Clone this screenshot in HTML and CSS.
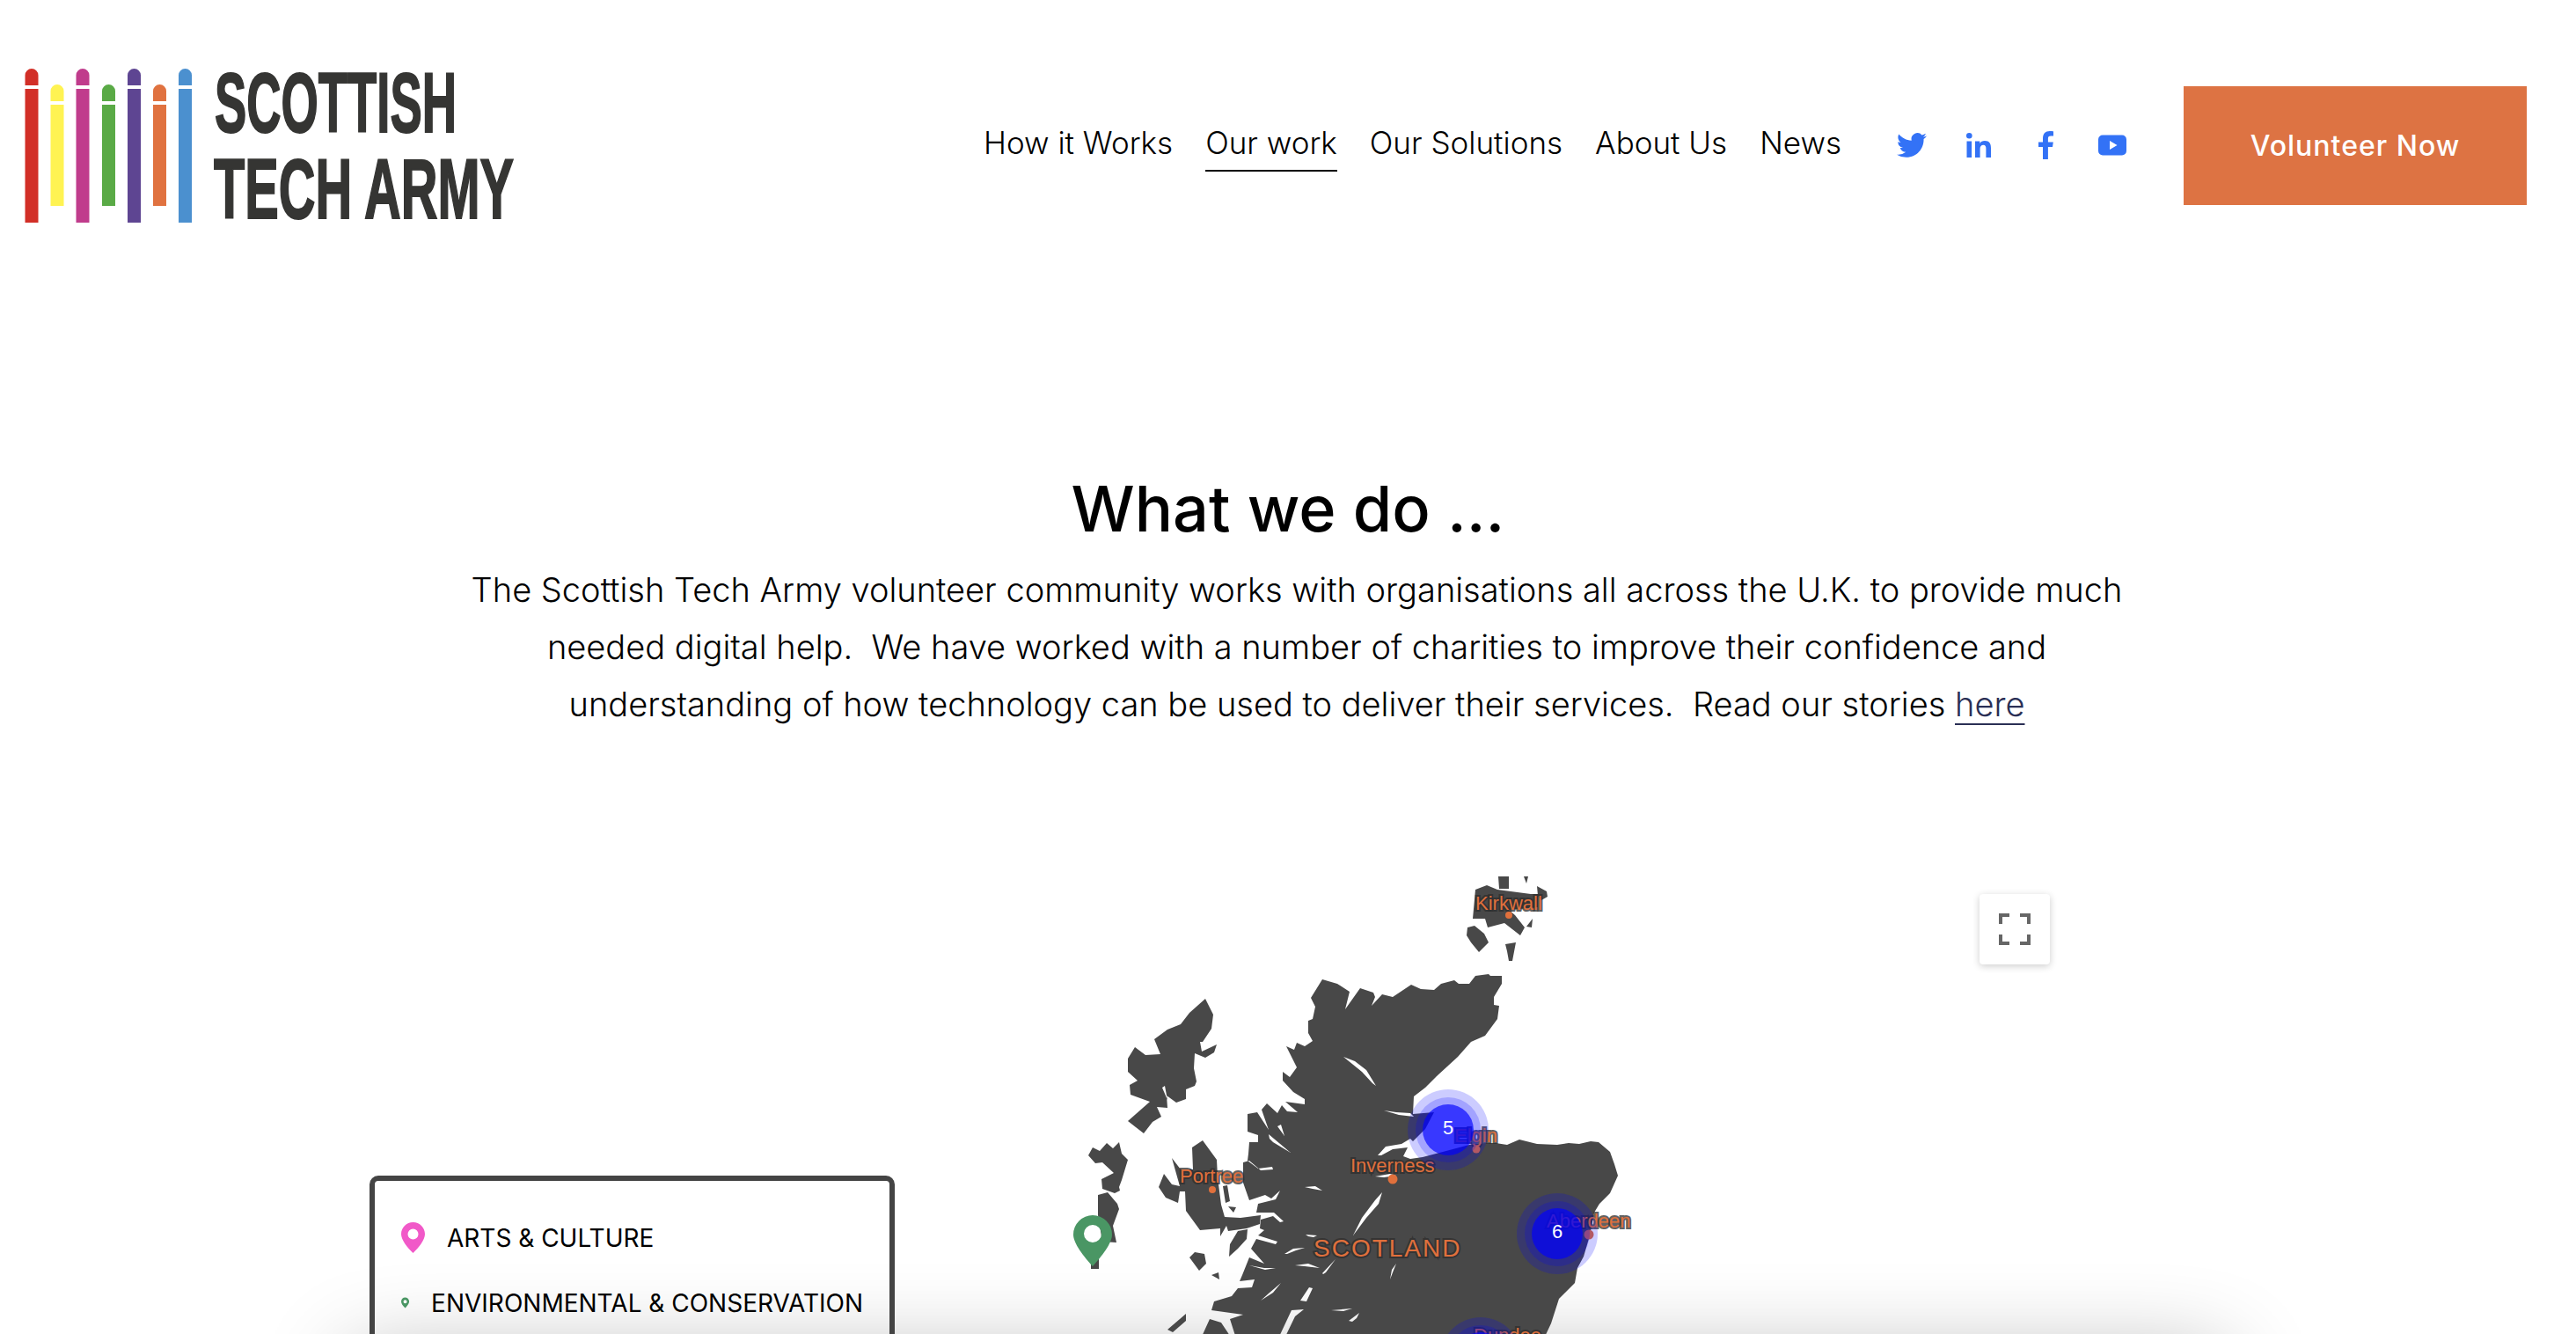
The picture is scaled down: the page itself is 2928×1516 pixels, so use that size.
FILE: index.html
```html
<!DOCTYPE html>
<html lang="en">
	<head>
		<meta charset="UTF-8" />
		<meta name="viewport" content="width=device-width, initial-scale=1.0" />
		<title>Our work - Scottish Tech Army</title>
		<link rel="stylesheet" href="styles.css">
	</head>
	<body>
		<div class="page">
			<header class="site-header">
				<a href="#" class="logo">
					<svg width="600" height="190" viewBox="0 70 600 190">
						<path class="bar-red" d="M28.500 96V84.500a7.500 7.500 0 0 1 15 0V96zM28.500 100h15v152h-15z" />
						<path class="bar-yellow" d="M57.500 114V102.500a7.500 7.500 0 0 1 15 0V114zM57.500 118h15v115h-15z" />
						<path class="bar-magenta" d="M86.500 96V84.500a7.500 7.500 0 0 1 15 0V96zM86.500 100h15v152h-15z" />
						<path class="bar-green" d="M116 114V102.500a7.500 7.500 0 0 1 15 0V114zM116 118h15v115h-15z" />
						<path class="bar-purple" d="M145 96V84.500a7.500 7.500 0 0 1 15 0V96zM145 100h15v152h-15z" />
						<path class="bar-orange" d="M174 114V102.500a7.500 7.500 0 0 1 15 0V114zM174 118h15v115h-15z" />
						<path class="bar-blue" d="M203 96V84.500a7.500 7.500 0 0 1 15 0V96zM203 100h15v152h-15z" />
						<text class="logo-text" x="244" y="149" textLength="275" lengthAdjust="spacingAndGlyphs">SCOTTISH</text>
						<text class="logo-text" x="243" y="247" textLength="341" lengthAdjust="spacingAndGlyphs">TECH ARMY</text>
					</svg>
				</a>
				<nav class="main-nav">
					<a href="#">How it Works</a>
					<a href="#" class="active">Our work</a>
					<a href="#">Our Solutions</a>
					<a href="#">About Us</a>
					<a href="#">News</a>
				</nav>
				<div class="social">
					<a href="#"><svg viewBox="0 0 24 24" width="34" height="34"><path d="M23.953 4.570a10 10 0 0 1-2.825.775 4.958 4.958 0 0 0 2.163-2.723c-.951.555-2.005.959-3.127 1.184a4.920 4.920 0 0 0-8.384 4.482C7.690 8.095 4.067 6.130 1.640 3.162a4.822 4.822 0 0 0-.666 2.475c0 1.710.870 3.213 2.188 4.096a4.904 4.904 0 0 1-2.228-.616v.060a4.923 4.923 0 0 0 3.946 4.827 4.996 4.996 0 0 1-2.212.085 4.936 4.936 0 0 0 4.604 3.417 9.867 9.867 0 0 1-6.102 2.105c-.390 0-.779-.023-1.170-.067a13.995 13.995 0 0 0 7.557 2.209c9.053 0 13.998-7.496 13.998-13.985 0-.210 0-.420-.015-.630A9.935 9.935 0 0 0 24 4.590z" /></svg></a>
					<a href="#"><svg viewBox="0 0 28 28" width="28" height="28"><circle cx="3.300" cy="3.300" r="3.300" /><path d="M.500 9.500h5.600V28H.500zM10 9.500h5.300v2.600c1-1.800 3-3.100 5.700-3.100 5.300 0 7 3.300 7 8.200V28h-5.600V18c0-2.500-.7-4.300-3-4.300-2.400 0-3.800 1.700-3.800 4.300v10H10z" /></svg></a>
					<a href="#"><svg viewBox="0 0 17 32" width="17" height="32"><path d="M5 32V18H0v-5.500h5V8.300C5 2.900 8 0 12.700 0c1.800 0 3.400.1 4.300.3v5.200h-2.900c-2.500 0-3.200 1.200-3.200 3v4h5.900l-.8 5.500h-5.100v14z" /></svg></a>
					<a href="#"><svg viewBox="0 0 32 24" width="32" height="24"><path fill-rule="evenodd" d="M5 .500h22a5 5 0 0 1 5 5v13a5 5 0 0 1-5 5H5a5 5 0 0 1-5-5v-13a5 5 0 0 1 5-5zM13 7v10l8.500-5z" /></svg></a>
				</div>
				<a href="#" class="volunteer-btn">Volunteer Now</a>
			</header>

			<section class="hero">
				<h1>What we do ...</h1>
				<p>
					The Scottish Tech Army volunteer community works with organisations all across the U.K. to provide much<br />
					needed digital help.&nbsp; We have worked with a number of charities to improve their confidence and<br />
					understanding of how technology can be used to deliver their services.&nbsp; Read our stories <a href="#">here</a>
				</p>
			</section>

			<section class="map">
				<svg class="map-canvas" width="700" height="560" viewBox="1220 980 700 560">
					<!-- mainland -->
					<path class="land" fill-rule="evenodd" d="M1503 1112L1520 1117 1534 1126 1529 1146 1546 1122 1561 1127 1563 1132 1559 1142 1571 1129 1583 1132 1604 1118 1615 1123 1630 1124 1638 1117 1653 1113 1658 1117 1670 1117 1677 1108 1692 1106 1694 1108 1707 1108 1707 1117 1698 1132 1698 1141 1704 1142 1702 1157 1688 1176 1672 1183 1657 1200 1633 1222 1620 1235 1607 1245 1606 1265 1630 1263 1620 1282 1606 1296 1603 1293 1593 1299 1575 1302 1566 1312 1570 1312 1583 1305 1600 1303 1595 1313 1603 1316 1617 1314 1640 1308 1670 1300 1693 1298 1700 1298 1713 1300 1727 1294 1747 1299 1770 1300 1783 1298 1795 1299 1808 1296 1817 1297 1830 1308 1835 1322 1839 1335 1830 1355 1818 1367 1812 1377 1807 1403 1800 1427 1793 1440 1790 1457 1772 1475 1763 1503 1755 1520 1405 1520 1398 1498 1413 1493 1377 1488 1380 1478 1400 1472 1407 1463 1423 1462 1426 1453 1409 1455 1412 1448 1420 1428 1437 1435 1422 1418 1428 1407 1450 1413 1452 1410 1430 1403 1437 1397 1432 1395 1433 1385 1447 1381 1455 1388 1459 1387 1448 1377 1428 1377 1430 1367 1450 1362 1455 1352 1445 1361 1438 1357 1420 1363 1413 1343 1413 1320 1420 1318 1433 1329 1447 1328 1446 1325 1430 1327 1418 1318 1419 1310 1420 1297 1430 1297 1430 1289 1418 1285 1418 1265 1429 1263 1442 1283 1434 1260 1440 1253 1452 1264 1457 1255 1463 1262 1475 1263 1461 1251 1483 1254 1483 1248 1470 1240 1458 1227 1458 1217 1466 1223 1474 1212 1462 1188 1471 1192 1474 1184 1483 1188 1492 1182 1487 1173 1487 1159 1492 1157 1495 1143 1490 1133z
						M1527 1200L1540 1205 1553 1215 1564 1233 1560 1230 1548 1217z
						M1483 1348L1495 1347 1503 1352 1492 1350z
						M1571 1354L1567 1367 1553 1383 1538 1403 1548 1383 1563 1363z
						M1484 1402L1497 1403 1493 1405 1487 1404z
						M1460 1424L1470 1418 1483 1417 1473 1420 1463 1424z
						M1472 1437L1487 1435 1500 1440 1483 1438z
						M1420 1437L1437 1440 1450 1440 1438 1442z
						M1503 1446L1518 1430 1507 1445 1504 1447z
						M1587 1435L1582 1442 1580 1453 1583 1445z
						M1433 1477L1443 1468 1456 1457 1447 1468z
						M1478 1477L1488 1462 1492 1463 1485 1478z
						M1513 1488L1537 1486 1527 1489z
						M1533 1500L1545 1491 1542 1497 1537 1501z
						M1573 1261L1587 1263 1603 1264 1607 1268 1590 1266z
						M1452 1279L1456 1277 1460 1290z
						M1442 1288L1467 1309 1447 1297 1443 1293z
						M1563 1336L1580 1333 1587 1335 1573 1337z
						M1453 1520L1468 1488 1482 1487 1472 1495 1460 1520z" />
					<!-- hebrides -->
					<path class="land" fill-rule="evenodd" d="M1370 1134L1379 1152 1377 1168 1367 1183 1364 1183 1366 1194 1383 1186 1380 1195 1370 1201 1358 1196 1357 1213 1360 1228 1358 1233 1348 1237 1348 1248 1337 1252 1326 1244 1327 1258 1315 1257 1320 1268 1310 1274 1300 1287 1282 1273 1307 1251 1285 1243 1284 1232 1293 1227 1282 1217 1282 1202 1290 1189 1302 1198 1319 1197 1312 1180 1327 1169 1342 1163 1352 1150z
						M1321 1235L1324 1233 1327 1249z" />
					<path class="land" d="M1272 1297L1275 1310 1282 1317 1275 1340 1272 1348 1273 1352 1267 1355 1253 1350 1252 1339 1266 1332 1253 1320 1245 1321 1237 1312 1242 1303 1250 1307 1258 1298 1265 1304z" />
					<path class="land" d="M1248 1357L1259 1354 1270 1367 1272 1373 1265 1392 1269 1411 1253 1410 1248 1380zM1240 1425H1249V1441H1240z" />
					<!-- skye -->
					<path class="land" d="M1355 1303L1367 1295 1383 1317 1384 1337 1385 1345 1388 1368 1392 1382 1410 1383 1433 1380 1432 1390 1417 1395 1396 1398 1394 1392 1387 1404 1387 1395 1364 1397 1348 1375 1347 1353 1341 1353 1339 1366 1325 1360 1317 1348 1323 1333 1332 1345 1341 1347 1332 1315 1342 1328 1356 1328z" />
					<path class="land" d="M1390 1347L1395 1346 1398 1364 1393 1366zM1396 1370L1405 1371 1402 1377zM1397 1427L1398 1413 1407 1398 1418 1396 1417 1407 1407 1418zM1352 1428L1358 1422 1369 1424 1371 1435 1363 1443zM1377 1448L1385 1445 1386 1453zM1327 1510L1348 1492 1348 1500 1333 1513zM1365 1520L1375 1498 1388 1502 1400 1520z" />
					<!-- orkney -->
					<path class="land" d="M1674 1043L1677 1010 1690 1005 1702 1010 1740 1015 1748 1015 1748 1030 1715 1033 1722 1039 1733 1053 1728 1062 1710 1048 1691 1053 1688 1043zM1703 995H1715V1009H1704zM1732 995H1737L1735 1003zM1747 1006L1758 1012 1759 1018 1752 1022 1748 1017zM1735 1052L1742 1043 1741 1053zM1667 1062L1668 1053 1676 1051 1687 1060 1692 1070 1681 1081 1672 1070zM1711 1072L1723 1070 1719 1091 1715 1091 1713 1080z" />
					<!-- labels -->
					<text class="city" x="1677" y="1033">Kirkwall</text>
					<circle class="dot" cx="1715" cy="1039" r="4" />
					<text class="city" x="1341" y="1343">Portree</text>
					<circle class="dot" cx="1378" cy="1351" r="4" />
					<text class="city" x="1535" y="1331">Inverness</text>
					<circle class="dot" cx="1583" cy="1339" r="5.500" />
					<text class="city" x="1653" y="1297">Elgin</text>
					<circle class="dot" cx="1678" cy="1305" r="4.500" />
					<text class="city" x="1758" y="1394">Aberdeen</text>
					<circle class="dot" cx="1806" cy="1402" r="5.500" />
					<text class="city" x="1675" y="1524">Dundee</text>
					<text class="region" x="1493" y="1427">SCOTLAND</text>
					<!-- clusters -->
					<g class="cluster">
						<circle cx="1646" cy="1283" r="46" /><circle cx="1646" cy="1283" r="37" /><circle class="core" cx="1646" cy="1283" r="29" />
						<text x="1646" y="1288">5</text>
					</g>
					<g class="cluster">
						<circle cx="1770" cy="1401" r="46" /><circle cx="1770" cy="1401" r="37" /><circle class="core" cx="1770" cy="1401" r="29" />
						<text x="1770" y="1406">6</text>
					</g>
					<g class="cluster">
						<circle cx="1683" cy="1542" r="46" /><circle cx="1683" cy="1542" r="37" /><circle class="core" cx="1683" cy="1542" r="29" />
					</g>
					<!-- marker -->
					<path class="pin-green" fill-rule="evenodd" d="M1242 1380a22 22 0 0 1 22 22c0 10-12 25-22 36-10-11-22-26-22-36a22 22 0 0 1 22-22zm0 11a10 10 0 1 0 0 20 10 10 0 0 0 0-20z" />
				</svg>

				<button class="fullscreen" type="button" aria-label="Toggle fullscreen view">
					<svg width="36" height="36" viewBox="0 0 36 36"><path d="M0 0h12v4H4v8H0zM24 0h12v12h-4V4h-8zM0 24h4v8h8v4H0zM32 24h4v12H24v-4h8z" /></svg>
				</button>

				<div class="legend">
					<div class="legend-item">
						<svg class="legend-pin pin-pink" viewBox="0 0 27 35" width="27" height="35"><path fill-rule="evenodd" d="M13.500 0C21 0 27 6 27 13.500 27 20 20 29 13.500 35 7 29 0 20 0 13.500 0 6 6 0 13.500 0zm0 7.500a6 6 0 1 0 0 12 6 6 0 0 0 0-12z" /></svg>
						<span>ARTS &amp; CULTURE</span>
					</div>
					<div class="legend-item">
						<svg class="legend-pin pin-green" viewBox="0 0 27 35" width="27" height="35"><path fill-rule="evenodd" d="M13.500 0C21 0 27 6 27 13.500 27 20 20 29 13.500 35 7 29 0 20 0 13.500 0 6 6 0 13.500 0zm0 7.500a6 6 0 1 0 0 12 6 6 0 0 0 0-12z" /></svg>
						<span>ENVIRONMENTAL &amp; CONSERVATION</span>
					</div>
				</div>
			</section>

			<div class="next-section"></div>
		</div>
	</body>
</html>
```

FILE: styles.css
```css
body {
	margin: 0;
	background-color: #fff;
	color: #000;
	font-family: Inter, "Noto Sans", sans-serif;
}
a {
	color: inherit;
	text-decoration: none;
}
.page {
	height: 1516px;
	overflow: hidden;
}

/* header */
.site-header {
	display: flex;
	align-items: center;
	height: 331px;
	padding-right: 56px;
}
.logo {
	display: block;
	height: 190px;
	margin-right: auto;
}
.logo-text {
	font-family: "Liberation Sans", sans-serif;
	font-weight: 700;
	font-size: 96px;
	fill: #353533;
	stroke: #353533;
	stroke-width: 2px;
}
.bar-red { fill: #d22f27; }
.bar-yellow { fill: #fff352; }
.bar-magenta { fill: #c03c8c; }
.bar-green { fill: #5aaa46; }
.bar-purple { fill: #5e4592; }
.bar-orange { fill: #e07240; }
.bar-blue { fill: #4b90cf; }

.main-nav {
	display: flex;
	gap: 37px;
	font-size: 35px;
	font-weight: 300;
	line-height: 50px;
}
.main-nav a {
	padding-bottom: 6px;
	border-bottom: 2px solid transparent;
}
.main-nav .active {
	border-bottom-color: #000;
}
.social {
	display: flex;
	gap: 40px;
	margin-left: 62px;
	margin-top: -2px;
}
.social a {
	display: flex;
	align-items: center;
	justify-content: center;
	width: 36px;
	height: 36px;
}
.social svg {
	fill: #3372f6;
}
.volunteer-btn {
	display: flex;
	align-items: center;
	justify-content: center;
	width: 390px;
	height: 135px;
	margin-left: 63px;
	background-color: #dd7343;
	color: #fff;
	font-size: 32px;
	font-weight: 500;
	letter-spacing: 1px;
}

/* intro */
.hero {
	padding-top: 207px;
	text-align: center;
}
.hero h1 {
	margin: 0;
	font-size: 72px;
	font-weight: 500;
	line-height: 80px;
}
.hero p {
	margin: 20px 0 0;
	padding-left: 20px;
	font-size: 38px;
	font-weight: 300;
	line-height: 65px;
	white-space: nowrap;
}
.hero p a {
	color: #2a2f55;
	text-decoration: underline;
	text-decoration-thickness: 2px;
	text-underline-offset: 8px;
}

/* map */
.map {
	position: relative;
	z-index: 1;
	height: 708px;
}
.map-canvas {
	position: absolute;
	left: 1220px;
	top: 148px;
}
.land {
	fill: #484848;
}
.city,
.region {
	font-family: "Liberation Sans", sans-serif;
	fill: #e0703c;
	stroke: #2e2e2e;
	stroke-width: 4px;
	stroke-opacity: 0.75;
	paint-order: stroke;
}
.city {
	font-size: 22px;
}
.region {
	font-size: 28px;
	letter-spacing: 2px;
}
.dot {
	fill: #e0703c;
}
.cluster circle {
	fill: rgba(0, 0, 255, 0.2);
}
.cluster .core {
	fill: rgba(0, 0, 255, 0.66);
}
.cluster text {
	font-family: "Liberation Sans", sans-serif;
	font-size: 22px;
	fill: #fff;
	text-anchor: middle;
}
.pin-green {
	fill: #4a9664;
}
.pin-pink {
	fill: #f159c8;
}
.fullscreen {
	position: absolute;
	left: 2250px;
	top: 183px;
	display: flex;
	align-items: center;
	justify-content: center;
	width: 80px;
	height: 80px;
	padding: 0;
	border: 0;
	border-radius: 4px;
	background-color: #fff;
	box-shadow: 0 2px 8px rgba(0, 0, 0, 0.2);
}
.fullscreen svg {
	fill: #666;
}
.legend {
	position: absolute;
	left: 420px;
	top: 503px;
	display: flex;
	flex-direction: column;
	gap: 39px;
	box-sizing: border-box;
	width: 597px;
	height: 400px;
	padding: 47px 30px;
	border: 6px solid #444;
	border-radius: 10px;
}
.legend-item {
	display: flex;
	align-items: center;
	gap: 25px;
	height: 35px;
	font-size: 28px;
	white-space: nowrap;
}

/* shadow of the block under the fold */
.next-section {
	width: 2130px;
	height: 200px;
	margin: 0 auto;
	box-shadow: 0 0 100px rgba(0, 0, 0, 0.3);
}
```
